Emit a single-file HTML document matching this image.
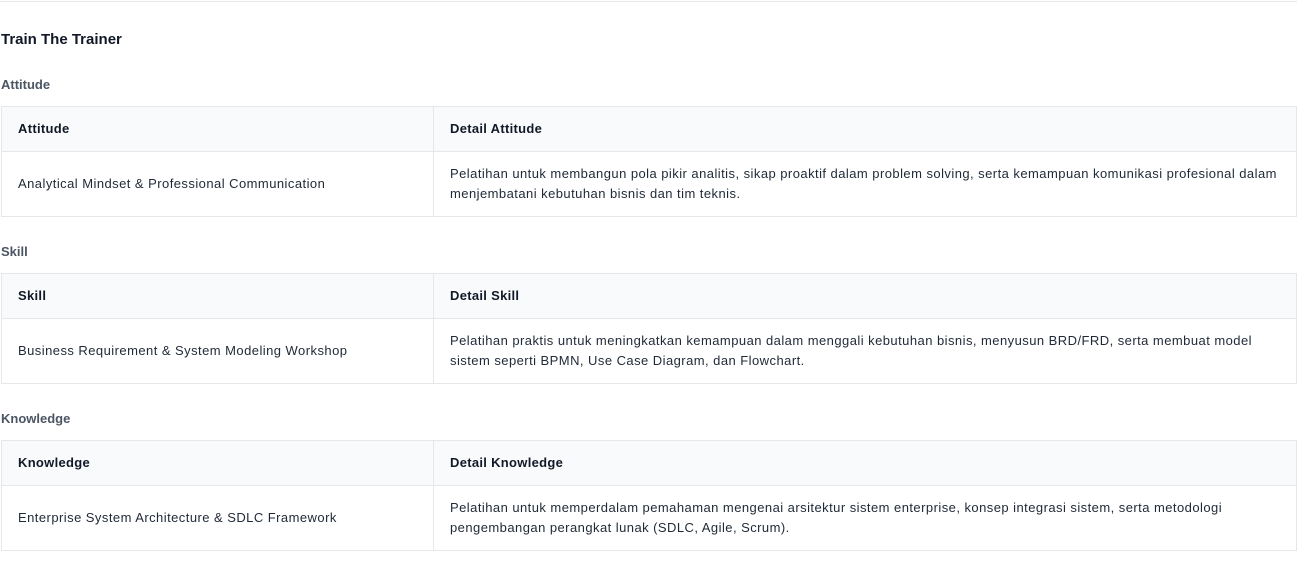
<!DOCTYPE html>
<html><head><meta charset="utf-8"><style>
body{margin:0;width:1304px;height:564px;background:#fff;font-family:"Liberation Sans",Arial,sans-serif;color:#1f2937;overflow:hidden;position:relative}
.top{position:absolute;left:0;top:1px;width:1297px;height:1px;background:#e5e7eb}
h1{position:absolute;left:1px;top:31px;margin:0;font-size:15px;font-weight:bold;color:#111827;line-height:18px}
.lab{position:absolute;left:1px;margin:0;font-size:13px;font-weight:bold;color:#4b5563;line-height:16px}
table{position:absolute;left:1px;width:1296px;border-collapse:collapse;font-size:13px}
td,th{border:1px solid #e5e7eb;padding:0 16px;text-align:left;vertical-align:middle;line-height:20px}
th{background:#f9fafb;height:44px;font-weight:bold;color:#111827;letter-spacing:0.3px}
td{height:64px;color:#1f2937;letter-spacing:0.45px}
td:first-child,th:first-child{width:399px}
</style></head><body>
<div class="top"></div>
<h1>Train The Trainer</h1>
<div class="lab" style="top:77px">Attitude</div>
<table style="top:106px"><tr><th>Attitude</th><th>Detail Attitude</th></tr>
<tr><td>Analytical Mindset &amp; Professional Communication</td><td>Pelatihan untuk membangun pola pikir analitis, sikap proaktif dalam problem solving, serta kemampuan komunikasi profesional dalam menjembatani kebutuhan bisnis dan tim teknis.</td></tr></table>
<div class="lab" style="top:244px">Skill</div>
<table style="top:273px"><tr><th>Skill</th><th>Detail Skill</th></tr>
<tr><td>Business Requirement &amp; System Modeling Workshop</td><td>Pelatihan praktis untuk meningkatkan kemampuan dalam menggali kebutuhan bisnis, menyusun BRD/FRD, serta membuat model sistem seperti BPMN, Use Case Diagram, dan Flowchart.</td></tr></table>
<div class="lab" style="top:411px">Knowledge</div>
<table style="top:440px"><tr><th>Knowledge</th><th>Detail Knowledge</th></tr>
<tr><td>Enterprise System Architecture &amp; SDLC Framework</td><td>Pelatihan untuk memperdalam pemahaman mengenai arsitektur sistem enterprise, konsep integrasi sistem, serta metodologi pengembangan perangkat lunak (SDLC, Agile, Scrum).</td></tr></table>
</body></html>
